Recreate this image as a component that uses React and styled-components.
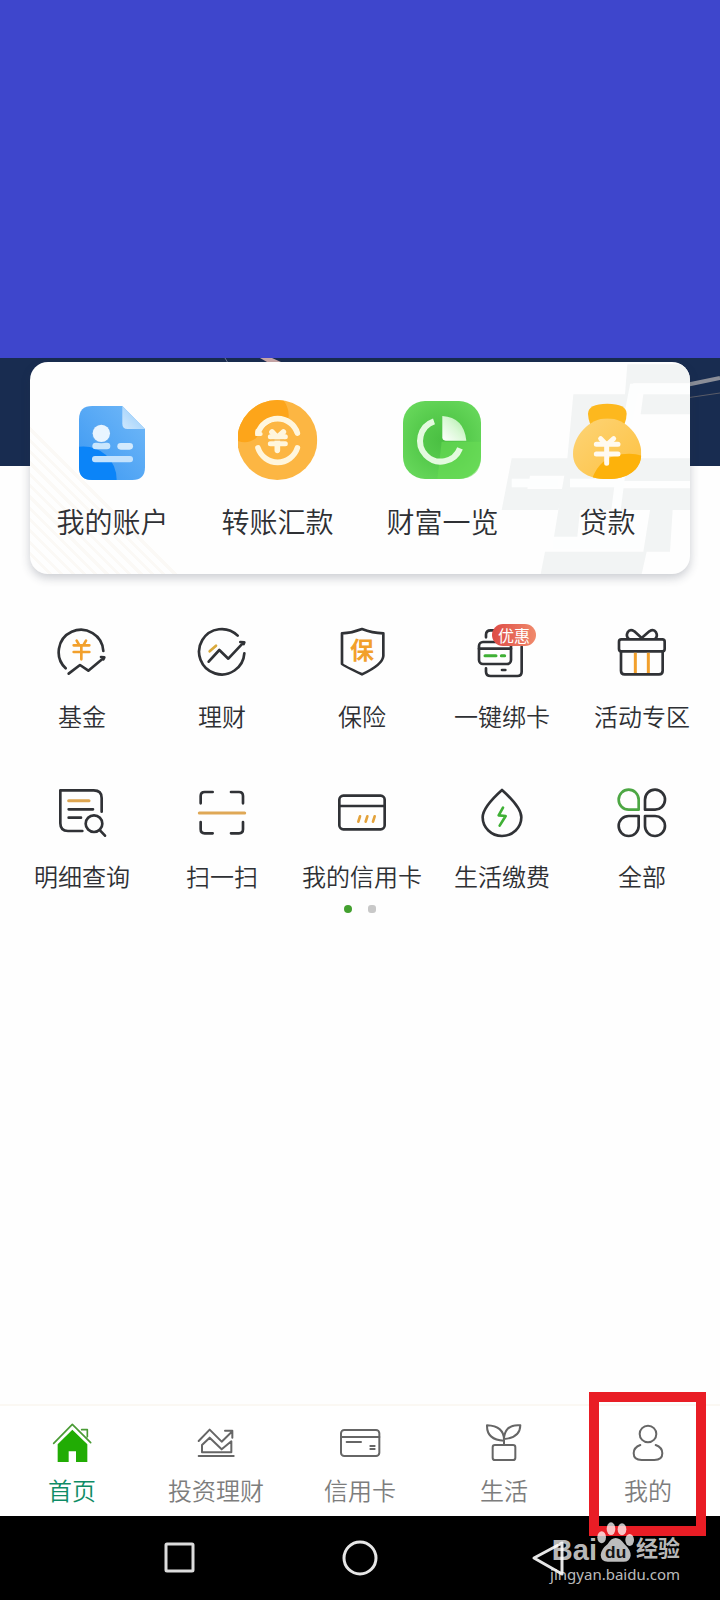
import React from "react"
import styled, { createGlobalStyle } from "styled-components"

const GlobalStyle = createGlobalStyle`
  * {
    box-sizing: border-box;
  }
  body {
    margin: 0;
    background: #fefefe;
    font-family: "Noto Sans CJK SC", "Noto Sans", sans-serif;
  }
  button {
    padding: 0;
    border: 0;
    background: none;
    font: inherit;
    color: inherit;
    cursor: pointer;
  }
  svg {
    display: block;
  }
`

const Page = styled.div`
  display: flex;
  flex-direction: column;
  min-height: 100vh;
`

const Cover = styled.header`
  height: 358px;
  background: #3e46cc;
`

const Banner = styled.div`
  height: 108px;
  background: #182c50;
`

const FeatureCard = styled.section`
  position: relative;
  margin: -104px 30px 0;
  padding: 38px 0 33px;
  border-radius: 18px;
  background: #fefefe;
  box-shadow: 0 4px 10px rgba(40, 50, 70, 0.24);
  overflow: hidden;
`

const CardStripes = styled.div`
  position: absolute;
  left: 0;
  bottom: 0;
  width: 150px;
  height: 150px;
  background: repeating-linear-gradient(
    45deg,
    transparent 0 5px,
    #fbf9f6 5px 8px
  );
  clip-path: polygon(0 0, 100% 100%, 0 100%);
`

const CardMark = styled.svg`
  position: absolute;
  right: 0;
  top: 0;
`

const FeatureList = styled.div`
  position: relative;
  display: grid;
  grid-template-columns: repeat(4, 1fr);
`

const Feature = styled.button`
  display: flex;
  flex-direction: column;
  align-items: center;
  gap: 21px;
`

const FeatureName = styled.span`
  font-size: 28px;
  line-height: 40px;
  font-weight: 350;
  color: #2e3034;
  white-space: nowrap;
`

const ServiceGrid = styled.section`
  display: grid;
  grid-template-columns: repeat(5, 1fr);
  row-gap: 52px;
  padding: 52px 8px 0 12px;
`

const Service = styled.button`
  position: relative;
  display: flex;
  flex-direction: column;
  align-items: center;
  gap: 20px;
`

const ServiceName = styled.span`
  font-size: 24px;
  line-height: 36px;
  font-weight: 350;
  color: #2e3034;
  white-space: nowrap;
`

const Badge = styled.span`
  position: absolute;
  left: 50%;
  top: -2px;
  width: 44px;
  height: 22px;
  margin-left: -10px;
  border-radius: 11px;
  background: linear-gradient(90deg, #dd4a45, #f08a6c);
  color: #fff;
  font-size: 16px;
  line-height: 22px;
  text-align: center;
`

const Dots = styled.div`
  display: flex;
  justify-content: center;
  gap: 16px;
  padding-top: 11px;
`

const Dot = styled.span`
  width: 8px;
  height: 8px;
  border-radius: ${props => (props.$active ? "50%" : "3px")};
  background: ${props => (props.$active ? "#43a02f" : "#c8c8c8")};
`

const TabBar = styled.nav`
  display: grid;
  grid-template-columns: repeat(5, 1fr);
  margin-top: auto;
  border-top: 2px solid #fbf8f3;
  background: #fff;
`

const Tab = styled.a`
  position: relative;
  display: flex;
  flex-direction: column;
  align-items: center;
  gap: 9px;
  padding: 15px 0 10px;
  font-size: 24px;
  line-height: 32px;
  font-weight: 350;
  color: ${props => (props.$active ? "#0f8c66" : "#7d7d7d")};
  text-decoration: none;
  white-space: nowrap;
`

const Highlight = styled.span`
  position: absolute;
  inset: -14px 14px -20px 13px;
  z-index: 1;
  border: 10px solid #e91d25;
  pointer-events: none;
`

const SystemBar = styled.footer`
  position: relative;
  display: grid;
  grid-template-columns: repeat(3, 1fr);
  align-items: center;
  justify-items: center;
  height: 84px;
  padding: 0 12.5%;
  background: #000;
`

const Watermark = styled.div`
  position: absolute;
  right: 40px;
  top: 6px;
  z-index: 2;
  color: rgba(255, 255, 255, 0.74);
`

const WatermarkLogo = styled.div`
  display: flex;
  align-items: flex-end;
  justify-content: flex-end;
  height: 42px;
  font-family: "Liberation Sans", "Noto Sans CJK SC", sans-serif;
  font-size: 29px;
  line-height: 28px;
  font-weight: 700;
`

const WatermarkName = styled.span`
  font-size: 22px;
  line-height: 30px;
`

const WatermarkUrl = styled.div`
  font-family: "Noto Sans", sans-serif;
  font-size: 15px;
  line-height: 20px;
  text-align: right;
`

const DARK = "#303236"
const ORANGE = "#f2a02c"
const GREEN = "#3fb035"

const LineIcon = ({ size = 52, stroke = DARK, width = 8, box, children }) => (
  <svg
    width={size}
    height={size}
    viewBox={box}
    fill="none"
    stroke={stroke}
    strokeWidth={width}
    strokeLinecap="round"
    strokeLinejoin="round"
    aria-hidden="true"
  >
    {children}
  </svg>
)

const BannerLines = () => (
  <svg width="100%" height="108" fill="none" aria-hidden="true">
    <path d="M225 0l3 5" stroke="#6c7894" strokeWidth="1" />
    <path d="M260 0h12l9 4h-14z" fill="#c9a7a8" />
    <svg x="100%" overflow="visible">
      <path d="M-34 27L0 20" stroke="#8b8e98" strokeWidth="4" />
      <path d="M-34 40L0 35" stroke="#5a5c68" strokeWidth="1" />
    </svg>
  </svg>
)

const AccountIcon = () => (
  <svg width="80" height="80" viewBox="39 30 240 240" aria-hidden="true">
    <defs>
      <linearGradient id="acc" x1="0" y1="1" x2="1" y2="0">
        <stop offset="0" stopColor="#3a97f2" />
        <stop offset="1" stopColor="#72b9f8" />
      </linearGradient>
      <linearGradient id="accFold" x1="0" y1="1" x2="1" y2="0">
        <stop offset="0" stopColor="#cfe8fd" />
        <stop offset="1" stopColor="#8ec8fa" />
      </linearGradient>
      <clipPath id="accClip">
        <path d="M97 48H187L255 117V232Q255 270 217 270H97Q57 270 57 232V88Q57 48 97 48Z" />
      </clipPath>
    </defs>
    <g clipPath="url(#accClip)">
      <rect x="57" y="48" width="198" height="222" fill="url(#acc)" />
      <path d="M57 170Q105 165 138 195Q170 225 170 270H57Z" fill="#0b84f8" />
    </g>
    <path d="M187 48L255 117H203Q187 117 187 101Z" fill="url(#accFold)" />
    <rect x="97" y="158" width="54" height="20" rx="10" fill="#c9e6fd" />
    <circle cx="124" cy="131" r="29" fill="#5fa9ef" />
    <circle cx="124" cy="130" r="26" fill="#e9f5ff" />
    <rect x="172" y="159" width="47" height="20" rx="10" fill="#d3eafd" />
    <rect x="96" y="198" width="123" height="19" rx="9" fill="#c3e2fd" />
  </svg>
)

const TransferIcon = () => (
  <svg width="80" height="80" viewBox="54 30 240 240" aria-hidden="true">
    <defs>
      <clipPath id="trClip">
        <circle cx="172" cy="150" r="120" />
      </clipPath>
    </defs>
    <g clipPath="url(#trClip)">
      <rect x="52" y="30" width="240" height="240" fill="#fcb643" />
      <path d="M52 30H190Q212 60 204 92Q150 80 108 145Q80 165 52 152Z" fill="#fda51a" />
    </g>
    <g fill="none" stroke="#fff6dd" strokeLinecap="round">
      <path d="M114 129A62 62 0 0 1 232 129" strokeWidth="17" />
      <path d="M114 174A62 62 0 0 0 232 174" strokeWidth="17" />
      <path d="M112 122V132H122" strokeWidth="12" />
      <path d="M156 126L172 143L190 126M172 143V181" strokeWidth="17" />
      <path d="M151 140H196M151 161H196" strokeWidth="15" />
    </g>
    <path d="M154 150H192" stroke="#f3bd62" strokeWidth="4" />
  </svg>
)

const WealthIcon = () => (
  <svg width="80" height="80" viewBox="39 30 240 240" aria-hidden="true">
    <defs>
      <radialGradient id="wl" cx="0.5" cy="0.5" r="0.7">
        <stop offset="0" stopColor="#4abf42" />
        <stop offset="0.5" stopColor="#58cc4e" />
        <stop offset="1" stopColor="#6ddc60" />
      </radialGradient>
      <linearGradient id="wlPie" x1="0" y1="1" x2="1" y2="0">
        <stop offset="0" stopColor="#ffffff" />
        <stop offset="0.5" stopColor="#d9f8d5" />
        <stop offset="1" stopColor="#a5eb9e" />
      </linearGradient>
    </defs>
    <rect x="39" y="33" width="234" height="234" rx="66" fill="url(#wl)" />
    <path d="M155 155H273V205Q270 265 207 267H142Z" fill="#69dc55" opacity="0.6" />
    <path d="M132 94A62 62 0 1 0 210 175" fill="none" stroke="#e4fadf" strokeWidth="18" />
    <path d="M157 78Q222 82 229 152H167Q157 152 157 142Z" fill="url(#wlPie)" />
  </svg>
)

const LoanIcon = () => (
  <svg width="80" height="80" viewBox="234 135 240 240" aria-hidden="true">
    <defs>
      <linearGradient id="ln" x1="0" y1="0" x2="1" y2="1">
        <stop offset="0" stopColor="#fdd477" />
        <stop offset="1" stopColor="#fdc140" />
      </linearGradient>
      <clipPath id="lnClip">
        <path d="M352 190C408 190 454 244 454 296C454 345 412 372 352 372C292 372 249 345 249 296C249 244 298 190 352 190Z" />
      </clipPath>
    </defs>
    <path d="M294 176Q294 146 352 146Q410 146 410 176Q410 192 402 212H302Q294 192 294 176Z" fill="#fdb81e" />
    <g clipPath="url(#lnClip)">
      <rect x="249" y="190" width="206" height="184" fill="url(#ln)" />
      <path d="M306 372Q330 306 395 298Q430 292 460 304V374Z" fill="#fdb20b" />
    </g>
    <g fill="none" stroke="#fffaf0" strokeWidth="15" strokeLinecap="round">
      <path d="M332 251L350 270L371 251M350 270V325" />
      <path d="M319 268H384M319 297H384" />
    </g>
  </svg>
)

const Yen = () => (
  <path d="M230 122L237 134M258 122L251 134M221 136H268M221 156H268M244 136V178" stroke={ORANGE} />
)

const FundIcon = () => (
  <LineIcon box="168 78 156 156">
    <path d="M197 205A67 67 0 1 1 310 153" />
    <path d="M206 221L240 195L265 212L308 176M303 171L313 172L310 178" />
    <Yen />
  </LineIcon>
)

const FinanceIcon = () => (
  <LineIcon box="588 78 156 156">
    <path d="M713 107A68 68 0 1 0 733 160" />
    <path d="M626 185L658 150L685 176L728 130M721 126L733 127L731 132" />
    <path d="M629 154L648 137" stroke="#d9a93c" />
  </LineIcon>
)

const InsuranceIcon = () => (
  <LineIcon box="-72 78 156 156">
    <path d="M6 87Q36 99 70 100V168Q68 194 6 223Q-52 196 -54 192V100Q-24 99 6 87Z" />
    <text
      x="6"
      y="178"
      textAnchor="middle"
      fontSize="72"
      fontWeight="700"
      fill={ORANGE}
      stroke="none"
    >
      保
    </text>
  </LineIcon>
)

const BindCardIcon = () => (
  <LineIcon box="348 78 156 156">
    <path d="M378 112V104Q378 91 392 91H400M485 140V215Q485 228 472 228H392Q378 228 378 215V205" />
    <rect x="357" y="126" width="96" height="66" rx="12" />
    <path d="M357 146H453" />
    <path d="M375 167H408M424 167H434" stroke={GREEN} strokeWidth="9" />
    <path d="M426 210H436" />
  </LineIcon>
)

const GiftIcon = () => (
  <LineIcon box="768 78 156 156">
    <rect x="777" y="118" width="137" height="36" rx="7" />
    <path d="M783 154V212Q783 223 794 223H897Q908 223 908 212V154" />
    <path d="M845 114L823 94Q810 86 803 97Q797 108 806 116M845 114L868 94Q881 86 888 97Q894 108 886 116" />
    <path d="M826 158V219M865 158V219" stroke={ORANGE} strokeWidth="9" strokeLinecap="butt" />
  </LineIcon>
)

const DetailIcon = () => (
  <LineIcon box="168 78 156 156">
    <path d="M305 155V114Q305 91 281 91H181V190Q181 213 204 213H247" />
    <path d="M206 122H267" stroke="#dda550" strokeWidth="9" />
    <path d="M206 148H279M206 173H243" />
    <circle cx="282" cy="191" r="25" />
    <path d="M300 211L315 227" />
  </LineIcon>
)

const ScanIcon = () => (
  <LineIcon box="588 78 156 156">
    <path d="M602 130V108Q602 96 614 96H638M693 96H717Q729 96 729 108V130M729 186V208Q729 220 717 220H693M638 220H614Q602 220 602 208V186" />
    <path d="M598 159H734" stroke="#dfa856" strokeWidth="9" />
  </LineIcon>
)

const CreditCardIcon = () => (
  <LineIcon box="-72 78 156 156">
    <rect x="-62" y="107" width="136" height="101" rx="12" />
    <path d="M-62 138H74" />
    <path d="M0 169L-5 185M22 169L17 185M44 169L39 185" stroke="#e3a23b" />
  </LineIcon>
)

const UtilityIcon = () => (
  <LineIcon box="348 78 156 156">
    <path d="M426 90Q484 142 484 172A58 56 0 0 1 368 172Q368 142 426 90Z" />
    <path d="M429 143L416 166L437 168L419 197" stroke={GREEN} />
  </LineIcon>
)

const AllIcon = () => (
  <LineIcon box="768 78 156 156">
    <path d="M836 149H806A30 30 0 1 1 836 119Z" stroke="#4da744" />
    <path d="M855 149H884A30 30 0 1 0 855 119Z" />
    <path d="M836 168H806A30 30 0 1 0 836 198Z" />
    <path d="M855 168H884A30 30 0 1 1 855 198Z" />
  </LineIcon>
)

const tabLine = { size: 44, stroke: "#666666", width: 6 }

const HomeIcon = () => (
  <LineIcon {...tabLine} box="150 93 132 132" stroke="#4a9b35">
    <path d="M161 160L217 103L272 158M245 119H262V140" strokeWidth="5" />
    <path d="M217 119L262 163V216H228V184H206V216H173V163Z" fill="#21ac04" stroke="none" />
  </LineIcon>
)

const InvestIcon = () => (
  <LineIcon {...tabLine} box="582 93 132 132">
    <path d="M596 153L629 119L665 155L697 124M675 122H697V143" />
    <path d="M606 187V165L629 143L665 178L694 154V187Z" />
    <path d="M596 198H701" />
  </LineIcon>
)

const CardTabIcon = () => (
  <LineIcon {...tabLine} box="-66 123 132 132">
    <rect x="-57" y="150" width="115" height="78" rx="10" />
    <path d="M-57 171H58M-40 186H3M31 198H44M31 207H44" />
  </LineIcon>
)

const LifeIcon = () => (
  <LineIcon {...tabLine} box="366 123 132 132">
    <rect x="398" y="195" width="68" height="45" rx="7" />
    <path d="M432 195V180Q432 138 381 136Q380 180 432 182M432 177Q480 174 481 136Q438 132 432 172" />
  </LineIcon>
)

const MineIcon = () => (
  <LineIcon {...tabLine} box="798 123 132 132">
    <circle cx="864" cy="162" r="25" />
    <path d="M841 195Q821 202 821 220Q821 240 845 240H883Q907 240 907 220Q907 202 887 195" />
  </LineIcon>
)

const Paw = () => (
  <svg width="39" height="42" viewBox="0 0 117 126" fill="currentColor" aria-hidden="true">
    <ellipse cx="14" cy="46" rx="13" ry="18" />
    <ellipse cx="42" cy="20" rx="13" ry="19" />
    <ellipse cx="75" cy="22" rx="13" ry="18" />
    <ellipse cx="98" cy="54" rx="13" ry="18" />
    <path d="M56 48Q70 48 82 66Q102 84 101 101Q98 121 76 119H36Q12 121 11 99Q12 82 32 66Q42 48 56 48Z" />
    <text
      x="56"
      y="108"
      textAnchor="middle"
      fontSize="52"
      fontWeight="700"
      fontFamily="Liberation Sans"
      fill="#141414"
    >
      du
    </text>
  </svg>
)

const features = [
  { name: "我的账户", Icon: AccountIcon },
  { name: "转账汇款", Icon: TransferIcon },
  { name: "财富一览", Icon: WealthIcon },
  { name: "贷款", Icon: LoanIcon },
]

const services = [
  { name: "基金", Icon: FundIcon },
  { name: "理财", Icon: FinanceIcon },
  { name: "保险", Icon: InsuranceIcon },
  { name: "一键绑卡", Icon: BindCardIcon, badge: "优惠" },
  { name: "活动专区", Icon: GiftIcon },
  { name: "明细查询", Icon: DetailIcon },
  { name: "扫一扫", Icon: ScanIcon },
  { name: "我的信用卡", Icon: CreditCardIcon },
  { name: "生活缴费", Icon: UtilityIcon },
  { name: "全部", Icon: AllIcon },
]

const tabs = [
  { name: "首页", Icon: HomeIcon, active: true },
  { name: "投资理财", Icon: InvestIcon },
  { name: "信用卡", Icon: CardTabIcon },
  { name: "生活", Icon: LifeIcon },
  { name: "我的", Icon: MineIcon, highlight: true },
]

const App = () => {
  return (
    <Page>
      <GlobalStyle />
      <Cover />
      <Banner>
        <BannerLines />
      </Banner>
      <FeatureCard>
        <CardStripes />
        <CardMark width="200" height="212" viewBox="0 21 600 636" fill="#f2f4f4" aria-hidden="true">
          <path d="M412 28H600V85H430L420 118L405 310H600V378H385L370 465H205L232 310L250 118H405Z" />
          <path d="M65 310H235L228 362H120L112 402H222L205 465H35Z" />
          <path d="M460 118H600V178H452Z" />
          <path d="M395 400H600V465H548L540 590H470L455 657H152L165 590H460L480 465H385Z" />
          <path d="M205 465H270L262 545H192Z" />
          <g fill="none" stroke="#fdfefe">
            <path d="M600 100H432L410 215L378 465" strokeWidth="28" />
            <path d="M65 384H205M240 384H385M190 568H450" strokeWidth="26" />
            <path d="M310 178L296 310" strokeWidth="16" />
          </g>
        </CardMark>
        <FeatureList>
          {features.map(({ name, Icon }) => (
            <Feature key={name} type="button">
              <Icon />
              <FeatureName>{name}</FeatureName>
            </Feature>
          ))}
        </FeatureList>
      </FeatureCard>
      <ServiceGrid>
        {services.map(({ name, Icon, badge }) => (
          <Service key={name} type="button">
            <Icon />
            {badge && <Badge>{badge}</Badge>}
            <ServiceName>{name}</ServiceName>
          </Service>
        ))}
      </ServiceGrid>
      <Dots>
        <Dot $active />
        <Dot />
      </Dots>
      <TabBar>
        {tabs.map(({ name, Icon, active, highlight }) => (
          <Tab key={name} href="#" $active={active}>
            <Icon />
            {name}
            {highlight && <Highlight />}
          </Tab>
        ))}
      </TabBar>
      <SystemBar>
        <button type="button" aria-label="最近任务">
          <LineIcon size={36} box="0 0 36 36" stroke="#dcdcdc" width={3}>
            <rect x="4" y="4" width="27" height="27" rx="1" />
          </LineIcon>
        </button>
        <button type="button" aria-label="主屏幕">
          <LineIcon size={36} box="0 0 36 36" stroke="#e6e6e6" width={3}>
            <circle cx="18" cy="18" r="16" />
          </LineIcon>
        </button>
        <button type="button" aria-label="返回">
          <LineIcon size={48} box="0 0 48 48" stroke="#e6e6e6" width={3}>
            <path d="M46 9V40L18 24Z" />
          </LineIcon>
        </button>
        <Watermark>
          <WatermarkLogo>
            <span>Bai</span>
            <Paw />
            <WatermarkName>经验</WatermarkName>
          </WatermarkLogo>
          <WatermarkUrl>jingyan.baidu.com</WatermarkUrl>
        </Watermark>
      </SystemBar>
    </Page>
  )
}

export default App
